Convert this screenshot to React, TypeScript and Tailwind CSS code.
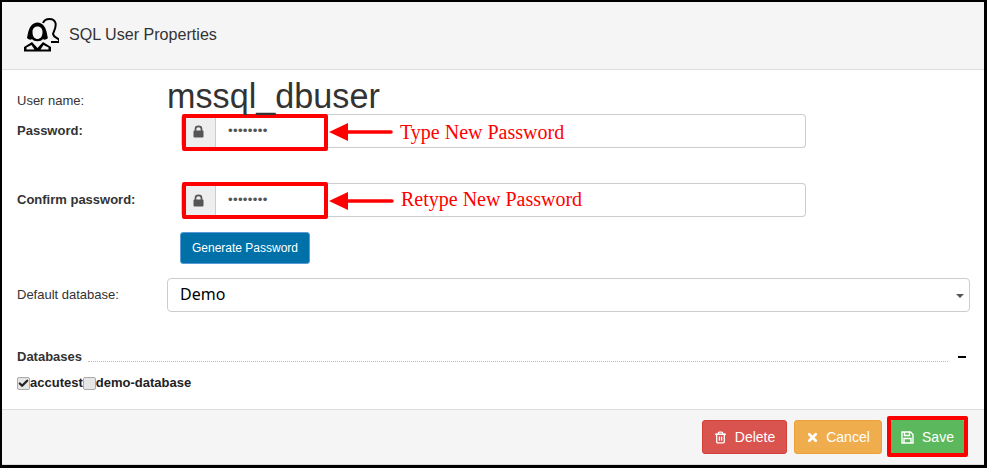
import React from "react";
import { Trash2, X, Check } from "lucide-react";

const Arrow = ({ w }: { w: number }) => (
  <svg width={w} height="20" viewBox={`0 0 ${w} 20`} className="block">
    <polygon points="0,10 19,1 19,19" fill="#ff0000" />
    <line x1="16" y1="10" x2={w - 2} y2="10" stroke="#ff0000" strokeWidth="3.5" strokeLinecap="round" />
  </svg>
);

const LockIcon = () => (
  <svg width="11" height="13" viewBox="0 0 11 13">
    <path d="M2.500 6 V4 C2.500 0.500 8.500 0.500 8.500 4 V6" fill="none" stroke="#555" strokeWidth="1.7" />
    <rect x="0.500" y="5.500" width="10" height="7" rx="1" fill="#555" />
  </svg>
);

const FloppyIcon = () => (
  <svg width="13" height="13" viewBox="0 0 13 13" fill="none" stroke="#fff" strokeWidth="1.4">
    <path d="M1 1 H9.500 L12 3.500 V12 H1 Z" />
    <path d="M3.500 1 V4.500 H8.500 V1" />
    <path d="M3 12 V7.500 H10 V12" />
  </svg>
);

const Users = () => (
  <svg width="36" height="36" viewBox="0 0 36 36" fill="none" stroke="#000">
    <path d="M20 6 C22 0.500 31 0.500 32.500 6 C33.500 10 31 14 30 17 C30.500 20 33 20.500 36 22.500 L36 25 L28 25" strokeWidth="2" />
    <path d="M4 21 C5 19 5 6 14.500 5.500 C24 6 24 19 25 21 C23 23 21 23 20 22 C18 25 11 25 9 22 C8 23 6 23 4 21 Z M9.500 15 C9.500 20 12 22 14.500 22 C17 22 19.500 20 19.500 15 C19.500 11 17 9.500 14.500 9.500 C12 9.500 9.500 11 9.500 15 Z" fill="#000" stroke="none" fillRule="evenodd" />
    <path d="M1 34.500 L1 30 L9 25 L14.500 31 L20 25 L28 30 L28 34.500 Z M3.500 32.500 L11.500 32.500 L8.500 28 L3.500 30.500 Z M17.500 32.500 L25.500 32.500 L25.500 30.500 L20.500 28 Z" fill="#000" stroke="none" fillRule="evenodd" />
  </svg>
);

const PasswordField = ({
  note,
  noteClass,
  boxClass,
  arrowW,
}: {
  note: string;
  noteClass: string;
  boxClass: string;
  arrowW: number;
}) => (
  <div className="relative ml-[14px] flex h-[34px] w-[625px]">
    <div className="flex w-[35px] items-center justify-center rounded-l-[4px] border border-[#ccc] bg-[#eeeeee]">
      <LockIcon />
    </div>
    <div className="flex flex-1 items-center rounded-r-[4px] border border-l-0 border-[#ccc] bg-white pl-[12px] text-[13.3px] tracking-[0.3px] text-[#555]">
      ••••••••
    </div>
    <div className={`pointer-events-none absolute left-[1px] h-[37px] w-[146px] rounded-[2px] border-[4px] border-[#ff0000] ${boxClass}`} />
    <div className="pointer-events-none absolute left-[148px] top-[8px] flex items-center">
      <Arrow w={arrowW} />
      <span className={`whitespace-nowrap font-['Liberation_Serif',serif] text-[20px] leading-[20px] text-[#ff0000] ${noteClass}`}>{note}</span>
    </div>
  </div>
);

export default function App() {
  return (
    <div className="flex h-[468px] w-[987px] flex-col border-b-[3px] border-l-[2px] border-r-[3px] border-t-[2px] border-black bg-white font-['Liberation_Sans',Arial,sans-serif] text-[13px] text-[#333]">
      <div className="flex h-[68px] shrink-0 items-center border-b border-[#ddd] bg-[#f5f5f5] pb-[2px] pl-[21px]">
        <Users />
        <span className="ml-[10px] text-[16.1px] text-[#333]">SQL User Properties</span>
      </div>

      <div className="flex min-h-0 flex-1 flex-col pl-[15px] pr-[14px] pt-[6px]">
        <div className="relative z-20 flex h-[38px] items-start">
          <span className="mt-[15px] w-[150px] shrink-0">User name:</span>
          <span className="text-[34.2px] leading-[40px] text-[#333]">mssql_dbuser</span>
        </div>

        <div className="relative z-10 flex h-[34px]">
          <span className="w-[150px] shrink-0 pt-[7px] font-bold">Password:</span>
          <PasswordField note="Type New Password" noteClass="ml-[7px]" boxClass="top-0" arrowW={64} />
        </div>

        <div className="mt-[35px] flex h-[34px]">
          <span className="w-[150px] shrink-0 pt-[7px] font-bold">Confirm password:</span>
          <PasswordField note="Retype New Password" noteClass="ml-[7px] -mt-[4px]" boxClass="-top-[1px]" arrowW={65} />
        </div>

        <div className="mt-[15px] pl-[163px]">
          <button className="flex h-[32px] w-[130px] items-center justify-center rounded-[3px] border border-[#5b9bd5] bg-[#0070a8] text-[12px] text-white">
            Generate Password
          </button>
        </div>

        <div className="mt-[14px] flex h-[34px]">
          <span className="w-[150px] shrink-0 pt-[7px]">Default database:</span>
          <div className="relative flex flex-1 items-center rounded-[4px] border border-[#ccc] bg-white pb-[2px] pl-[12px] font-['Noto_Sans',sans-serif] text-[16px] text-black">
            Demo
            <span className="absolute right-[5px] top-[15px] h-0 w-0 border-x-[4px] border-t-[4px] border-x-transparent border-t-[#555]" />
          </div>
        </div>

        <div className="mt-[37px] flex h-[16px] items-center">
          <span className="font-bold">Databases</span>
          <div className="ml-[6px] mt-[9px] h-0 flex-1 border-t border-dotted border-[#bbb]" />
          <span className="ml-[10px] mr-[4px] h-[2px] w-[8px] bg-black" />
        </div>

        <div className="mt-[10px] flex h-[16px] items-center font-bold text-[#222]">
          <span className="flex h-[13px] w-[13px] items-center justify-center rounded-[2px] border border-[#aaa] bg-[#e6e6e6]">
            <Check size={11} strokeWidth={5} stroke="#222" />
          </span>
          <span>accutest</span>
          <span className="h-[13px] w-[13px] rounded-[2px] border border-[#aaa] bg-[#e6e6e6]" />
          <span>demo-database</span>
        </div>
      </div>

      <div className="flex h-[56px] shrink-0 items-start justify-end border-b border-t border-[#ddd] bg-[#f5f5f5] pr-[19px] pt-[10px]">
        <button className="flex h-[34px] w-[85px] items-center justify-center gap-[8px] rounded-[3px] border border-[#d43f3a] bg-[#d9534f] text-[14px] text-white">
          <Trash2 size={13} strokeWidth={2.4} />
          Delete
        </button>
        <button className="ml-[7px] flex h-[34px] w-[88px] items-center justify-center gap-[7px] rounded-[3px] border border-[#eea236] bg-[#f0ad4e] text-[14px] text-white">
          <X size={13} strokeWidth={5} />
          Cancel
        </button>
        <button className="relative ml-[8px] flex h-[34px] w-[75px] items-center justify-center gap-[8px] rounded-[3px] bg-[#5cb85c] text-[14px] text-white">
          <FloppyIcon />
          Save
          <span className="pointer-events-none absolute -inset-x-[3px] -bottom-[3px] -top-[4px] rounded-[2px] border-[4px] border-[#ff0000]" />
        </button>
      </div>
    </div>
  );
}
